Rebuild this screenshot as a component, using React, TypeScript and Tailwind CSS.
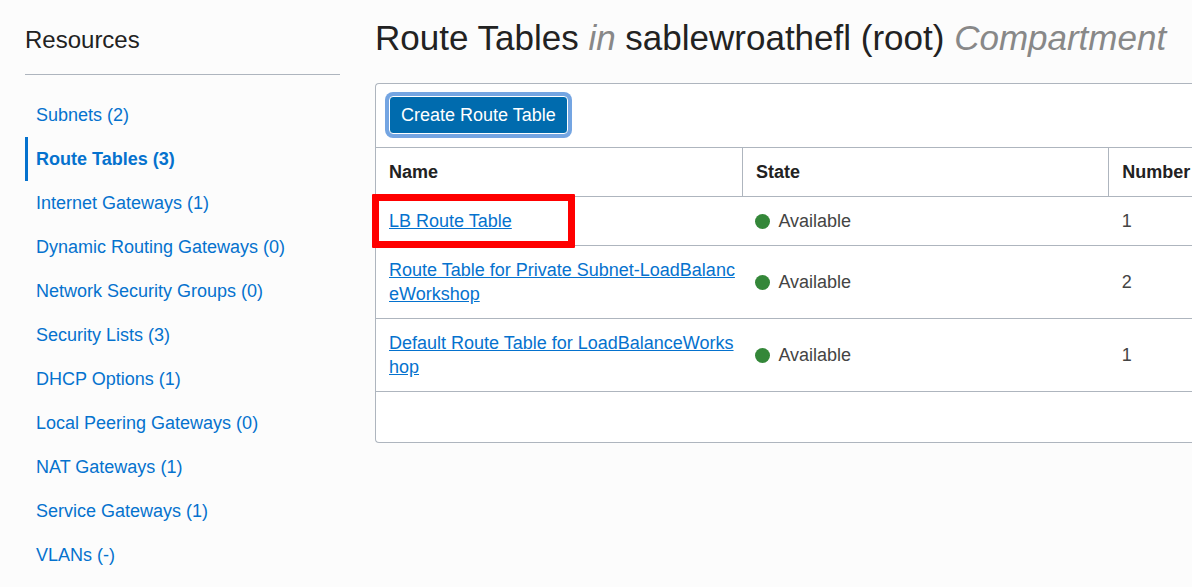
import React from "react";

const resources = [
  { label: "Subnets", count: "2" },
  { label: "Route Tables", count: "3", selected: true },
  { label: "Internet Gateways", count: "1" },
  { label: "Dynamic Routing Gateways", count: "0" },
  { label: "Network Security Groups", count: "0" },
  { label: "Security Lists", count: "3" },
  { label: "DHCP Options", count: "1" },
  { label: "Local Peering Gateways", count: "0" },
  { label: "NAT Gateways", count: "1" },
  { label: "Service Gateways", count: "1" },
  { label: "VLANs", count: "-" },
];

const routeTables = [
  { name: "LB Route Table", state: "Available", rules: 1, highlighted: true },
  { name: "Route Table for Private Subnet-LoadBalanceWorkshop", state: "Available", rules: 2 },
  { name: "Default Route Table for LoadBalanceWorkshop", state: "Available", rules: 1 },
];

function Sidebar() {
  return (
    <aside className="w-[315px] shrink-0">
      <h2 className="border-b border-[#aeb5be] pt-[25px] pb-[19px] text-2xl leading-[30px] text-[#222]">
        Resources
      </h2>
      <nav aria-label="Resources" className="pt-[18px]">
        <ul>
          {resources.map((item) => (
            <li key={item.label}>
              <a
                href="#"
                aria-current={item.selected ? "page" : undefined}
                className={
                  item.selected
                    ? "block border-l-[3px] border-[#0572ce] pl-2 leading-[44px] font-bold text-[#0572ce]"
                    : "block pl-[11px] leading-[44px] text-[#0572ce]"
                }
              >
                {item.label} ({item.count})
              </a>
            </li>
          ))}
        </ul>
      </nav>
    </aside>
  );
}

function RouteTableList() {
  return (
    <section className="rounded-l border border-r-0 border-[#aeb5be] bg-white">
      <div className="flex px-[13px] pt-3 pb-[13px]">
        <button
          type="button"
          className="rounded border border-white bg-[#006bae] px-[11px] py-1.5 leading-6 text-white ring-4 ring-[#74a5e2]"
        >
          Create Route Table
        </button>
      </div>
      <table className="w-full table-fixed border-y border-[#aeb5be] text-left">
        <thead>
          <tr className="border-b border-[#aeb5be] text-[#222]">
            <th className="w-[44.9%] border-r border-[#aeb5be] px-[13px] py-3 font-bold">Name</th>
            <th className="w-[44.9%] border-r border-[#aeb5be] px-[13px] py-3 font-bold">State</th>
            <th className="py-3 pl-[13px] font-bold">Number</th>
          </tr>
        </thead>
        <tbody>
          {routeTables.map((row) => (
            <tr key={row.name} className="border-b border-[#aeb5be] last:border-b-0">
              <td className="relative py-3 pr-1 pl-[13px] break-all">
                <a href="#" className="text-[#0572ce] underline">
                  {row.name}
                </a>
                {row.highlighted && (
                  <div className="pointer-events-none absolute -top-[3px] -left-1 h-[54px] w-[203px] rounded-[1px] border-7 border-[#f00]" />
                )}
              </td>
              <td className="px-[13px] py-3">
                <div className="flex items-center gap-2 text-[#444]">
                  <span className="size-[15px] rounded-full bg-[#348739]" />
                  {row.state}
                </div>
              </td>
              <td className="py-3 pl-[13px] text-[#444]">{row.rules}</td>
            </tr>
          ))}
        </tbody>
      </table>
      <div className="h-[50px]" />
    </section>
  );
}

export default function App() {
  return (
    <div className="flex min-h-screen gap-[35px] overflow-hidden bg-[#fcfcfc] pl-[25px] font-['Liberation_Sans',Arial,sans-serif] text-lg leading-6">
      <Sidebar />
      <main className="min-w-0 flex-1">
        <h1 className="pt-4 pb-[23px] text-[35px] leading-[44px] whitespace-nowrap text-[#222]">
          Route Tables <em className="text-[#888]">in</em> sablewroathefl (root){" "}
          <em className="text-[#888]">Compartment</em>
        </h1>
        <RouteTableList />
      </main>
    </div>
  );
}
